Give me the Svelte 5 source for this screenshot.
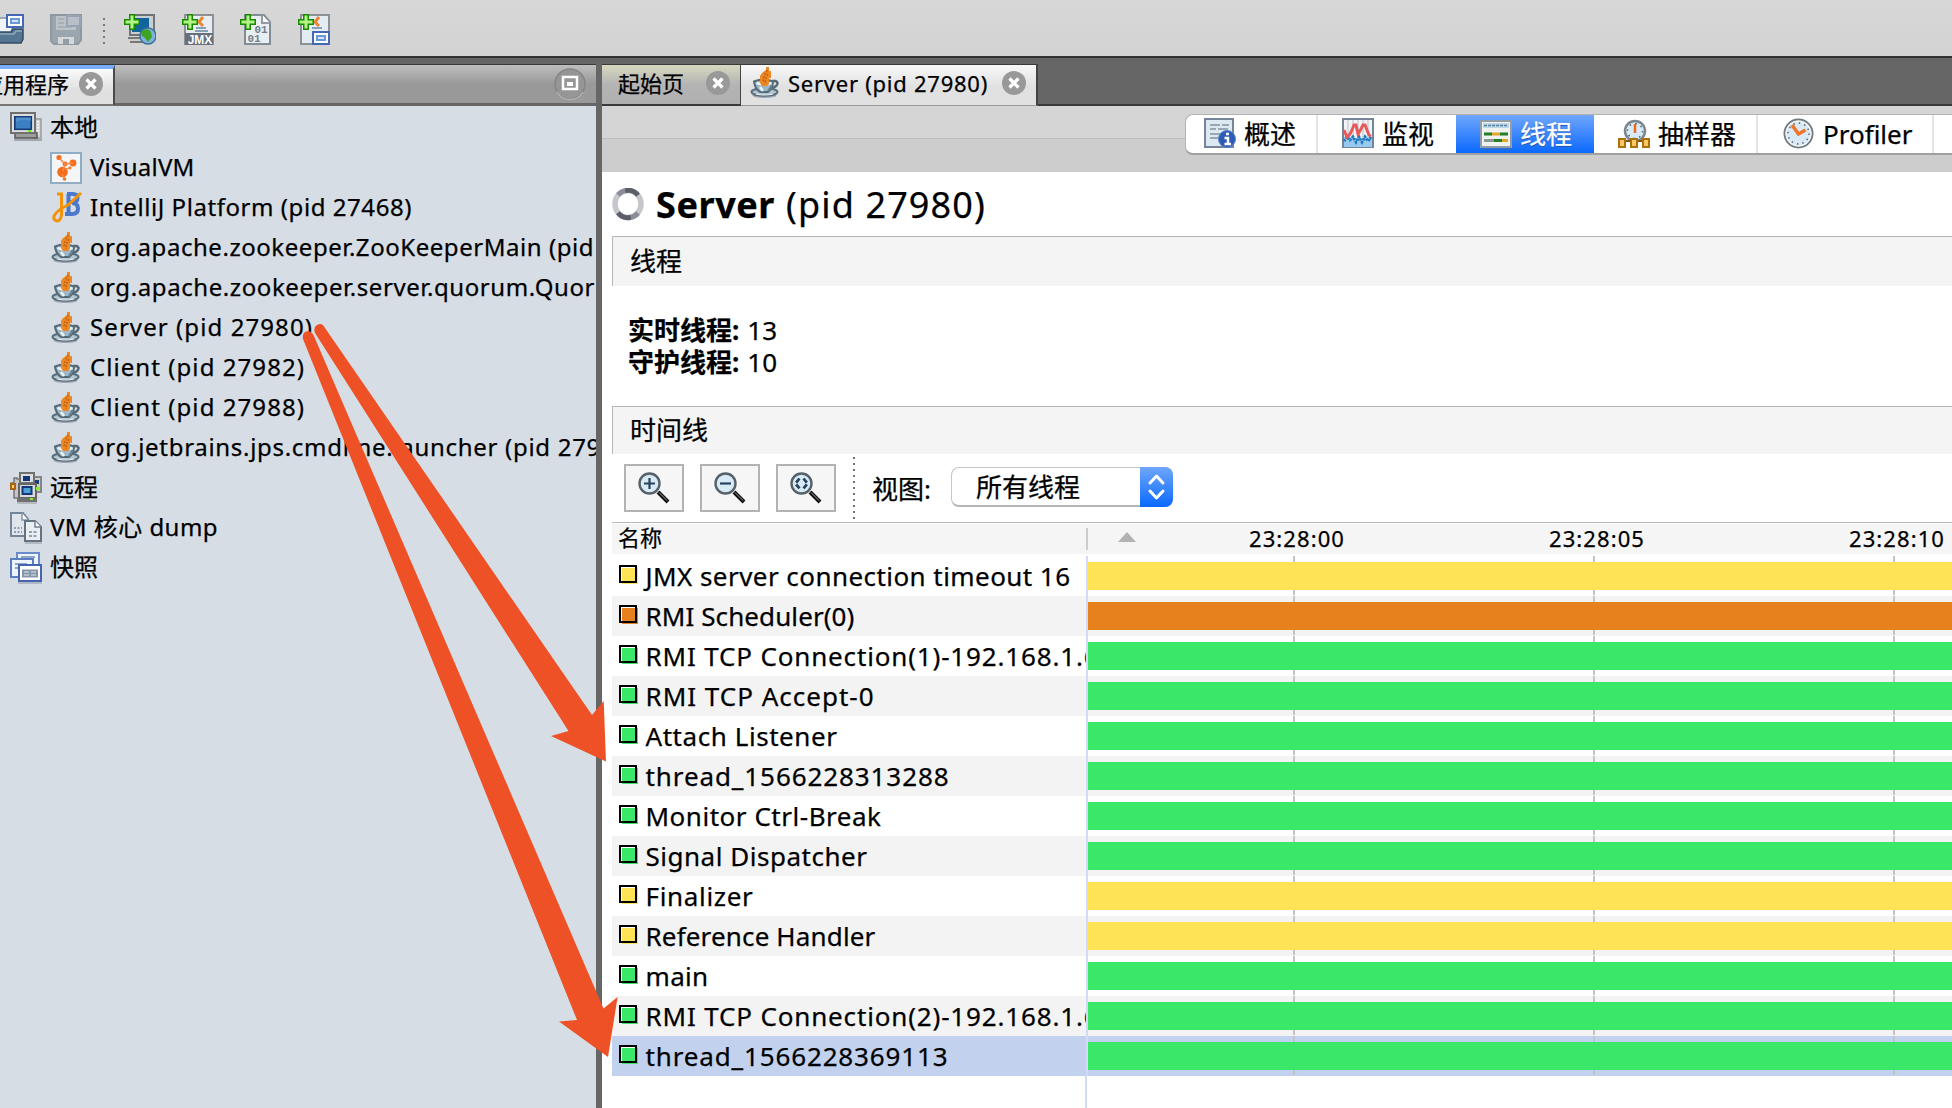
<script>
  const GREEN = '#3be768';
  const YELLOW = '#ffe357';
  const ORANGE = '#e6811e';

  const tree = [
    { icon: 'local', label: '本地', w: 48 },
    { icon: 'vvm', label: 'VisualVM', w: 104.5, child: true },
    { icon: 'jb', label: 'IntelliJ Platform (pid 27468)', w: 322, child: true },
    { icon: 'java', label: 'org.apache.zookeeper.ZooKeeperMain (pid', w: 504, child: true },
    { icon: 'java', label: 'org.apache.zookeeper.server.quorum.Quor', w: 505, child: true },
    { icon: 'java', label: 'Server (pid 27980)', w: 223, child: true },
    { icon: 'java', label: 'Client (pid 27982)', w: 215, child: true },
    { icon: 'java', label: 'Client (pid 27988)', w: 215, child: true },
    { icon: 'java', label: 'org.jetbrains.jps.cmdline.launcher (pid 279', w: 511, child: true },
    { icon: 'remote', label: '远程', w: 48 },
    { icon: 'dump', label: 'VM 核心 dump', w: 168 },
    { icon: 'snap', label: '快照', w: 48 }
  ];

  const threads = [
    { name: 'JMX server connection timeout 16', w: 425, color: YELLOW },
    { name: 'RMI Scheduler(0)', w: 209, color: ORANGE },
    { name: 'RMI TCP Connection(1)-192.168.1.6', w: 454, color: GREEN },
    { name: 'RMI TCP Accept-0', w: 229, color: GREEN },
    { name: 'Attach Listener', w: 192, color: GREEN },
    { name: 'thread_1566228313288', w: 304, color: GREEN },
    { name: 'Monitor Ctrl-Break', w: 236, color: GREEN },
    { name: 'Signal Dispatcher', w: 222, color: GREEN },
    { name: 'Finalizer', w: 108, color: YELLOW },
    { name: 'Reference Handler', w: 230, color: YELLOW },
    { name: 'main', w: 63, color: GREEN },
    { name: 'RMI TCP Connection(2)-192.168.1.6', w: 454, color: GREEN },
    { name: 'thread_1566228369113', w: 303, color: GREEN, selected: true }
  ];

  const views = [
    { icon: 'overview', label: '概述', cls: 'v1' },
    { icon: 'monitor', label: '监视', cls: 'v2' },
    { icon: 'threads', label: '线程', cls: 'v3', active: true },
    { icon: 'sampler', label: '抽样器', cls: 'v4' },
    { icon: 'profiler', label: 'Profiler', cls: 'v5' }
  ];

  const ticks = ['23:28:00', '23:28:05', '23:28:10'];

  // Spreads a label's letters evenly so that it takes up the given width.
  function fit(node, width) {
    const natural = node.getBoundingClientRect().width;
    node.style.letterSpacing = (width - natural) / node.textContent.length + 'px';
  }
</script>

{#snippet plus()}
  <path d="M5 0h6v5h5v6h-5v5H5v-5H0V5h5z" fill="#178a00" />
  <path d="M7 2h2v5h5v2H9v5H7V9H2V7h5z" fill="#b9f58a" />
  <path d="M6.500 1.500h3v5h5v3h-5v5h-3v-5h-5v-3h5z" fill="#b4f385" />
{/snippet}

{#snippet window_(x, y)}
  <rect x={x + 1} y={y + 1} width="16" height="12" fill="#fff" stroke="#4468b6" stroke-width="2" />
  <rect x={x + 5} y={y + 5} width="8" height="4" fill="#d5e4f8" stroke="#6b96d8" stroke-width="2" />
{/snippet}

{#snippet icon(name)}
  <svg class="icon" width="32" height="32" viewBox="0 0 32 32">
    {#if name === 'java'}
      <ellipse cx="15.500" cy="28.500" rx="12" ry="2.500" fill="#9ea7b0" />
      <ellipse cx="15.500" cy="25" rx="13" ry="3.800" fill="#b4c6d1" stroke="#5a6f7d" stroke-width="2" />
      <path d="M23 14h3.500q3.500 1.500 1 4.500q-2 2.500-6 2.500" fill="none" stroke="#536977" stroke-width="2.500" />
      <path d="M5 14.500q9.500-4 19 0q0 7-5 10.500h-8q-5-3-6-10.500z" fill="#9cb6c6" stroke="#566b79" stroke-width="2" />
      <path d="M7.500 16q7.500 2.500 15 0" stroke="#e9f4fa" stroke-width="2.500" fill="none" />
      <path d="M11 20l3 4" stroke="#e9f4fa" stroke-width="2.500" />
      <path d="M19 24q3-3 3.500-6" stroke="#67808f" stroke-width="2" fill="none" />
      <path d="M7 27q8.500 2 17 0" stroke="#eaf3f8" stroke-width="1.200" fill="none" />
      <path d="M17 0h3v4h2v7h-2v6l-2 2h-5l-2-3v-7l2-3 4-3z" fill="#ed8826" />
      <path d="M18.500 3q-4 5-4.500 12M19 7q-3 4-3 10" stroke="#c2620f" stroke-width="1.400" fill="none" stroke-dasharray="2.200 1.200" />
    {:else if name === 'local'}
      <path d="M24 7h7v19h-7z" fill="#d4d4d4" stroke="#9a9a9a" stroke-width="1.500" />
      <path d="M28 9v15" stroke="#fff" stroke-width="1.500" stroke-dasharray="1.500 1.500" />
      <path d="M4 28h28" stroke="#9fa6ad" stroke-width="2" />
      <path d="M5 21h22v5H5z" fill="#9c9c9c" stroke="#555" stroke-width="1.500" />
      <rect x="1" y="1" width="24" height="20" fill="#dedede" stroke="#707070" stroke-width="2" />
      <rect x="4.800" y="4.800" width="16.500" height="12.500" fill="#3c7fc2" stroke="#143a78" stroke-width="1.600" />
      <path d="M6 10q7-4 15-1v-3.500H6z" fill="#6aa3da" opacity=".5" />
      <rect x="18" y="18" width="3" height="2" fill="#6fee22" />
    {:else if name === 'vvm'}
      <rect x="1" y="1" width="30" height="30" fill="#f4f5f7" stroke="#91adc4" stroke-width="2" />
      <g fill="#f46d1b">
        <circle cx="12.500" cy="20" r="5.300" /><circle cx="23" cy="11" r="3.400" />
        <circle cx="9" cy="5.500" r="2.600" /><circle cx="15" cy="12" r="2.400" />
        <circle cx="14.500" cy="27" r="1.800" /><circle cx="20" cy="16" r="1.400" />
      </g>
      <path d="M9 6l6 6-2 7M23 11l-8 1M12 22l2.500 5M15 17l5-1" stroke="#f5884a" stroke-width="1.500" fill="none" />
    {:else if name === 'jb'}
      <path d="M18.500 2v20M17 2h6q4.500 0 4.500 4t-4.500 4h-4M22 11q6 0 6 5.500t-6 5.500h-7" fill="none" stroke="#4b78cc" stroke-width="4" />
      <path d="M7 2h4.500v21q-1 6-4.500 6q-4-1-3-5q3-6 14-11L31 1" fill="none" stroke="#f59308" stroke-width="3" />
    {:else if name === 'remote'}
      <path d="M7 7h6v19H4V12H1v-1h3V6h3z" fill="#c6c6c6" stroke="#777" stroke-width="1.500" />
      <rect x="22" y="5" width="9" height="15" fill="#ccc" stroke="#858585" stroke-width="2" />
      <rect x="22" y="8" width="7" height="4" fill="#153f86" />
      <rect x="10" y="1" width="14" height="10" fill="#ddd" stroke="#707070" stroke-width="2" />
      <rect x="13" y="4" width="7" height="5" fill="#12387c" />
      <rect x="9" y="12" width="17" height="14" fill="#dadada" stroke="#666" stroke-width="2" />
      <rect x="12.500" y="15" width="9" height="7" fill="#4fa0d8" stroke="#12387c" stroke-width="2" />
      <path d="M7 28h20" stroke="#707070" stroke-width="4" />
      <path d="M7 31h20" stroke="#a9aeb3" stroke-width="1.500" />
      <rect x="1" y="12" width="4" height="5" fill="#ffd27a" stroke="#a9640c" stroke-width="2" />
      <rect x="26" y="15" width="4" height="3" fill="#7ff02a" /><rect x="20" y="26" width="3" height="2" fill="#7ff02a" />
    {:else if name === 'dump'}
      <path d="M1 1h12l5 6v17H1z" fill="#e0e6eb" stroke="#76869a" stroke-width="2" />
      <path d="M12 1v7h6" fill="#fff" stroke="#8594a2" stroke-width="1.500" />
      <path d="M4 16h8M4 20h8" stroke="#76869a" stroke-width="1.500" stroke-dasharray="2 1.500" />
      <path d="M15 9h10l6 6v14H15z" fill="#e9eff3" stroke="#64737f" stroke-width="2" />
      <path d="M25 9v6h6" fill="#fff" stroke="#71808e" stroke-width="1.500" />
      <path d="M19 20h8M19 24h8" stroke="#76869a" stroke-width="1.500" stroke-dasharray="3 1.500" />
      <path d="M15 31h17" stroke="#a7adb3" stroke-width="1.500" />
    {:else if name === 'snap'}
      <rect x="7" y="1" width="22" height="17" fill="#eef4fb" stroke="#6a8bc9" stroke-width="2" />
      <path d="M11 5h14" stroke="#8fa6c6" stroke-width="2" />
      <rect x="1" y="7" width="22" height="18" fill="#eef4fb" stroke="#5a7cc0" stroke-width="2" />
      <path d="M5 12h12M5 16h4" stroke="#8fa6c6" stroke-width="2" />
      <rect x="9" y="13" width="22" height="16" fill="#fff" stroke="#4565b0" stroke-width="2" />
      <path d="M13 18.500h14v6H13zM20 18v7M13 21.500h14" fill="#dfe6ee" stroke="#8596a8" stroke-width="2" />
      <path d="M8 31h24" stroke="#a5adb8" stroke-width="1.500" />
    {:else if name === 'open'}
      <path d="M1 4h14l5 6v14H1z" fill="#eef4f8" stroke="#8193a4" stroke-width="1.500" />
      <path d="M1 18h18l2-3h10v10l-2 4H1z" fill="#567591" stroke="#2f4d68" stroke-width="1.500" />
      <path d="M2 20h20l2-3h6" stroke="#8fa9be" stroke-width="1.500" fill="none" />
      {@render window_(14, 0)}
    {:else if name === 'save'}
      <path d="M1 1h30v25l-3 4H4l-3-3z" fill="#9ba5ad" stroke="#8d98a1" stroke-width="2" />
      <path d="M6 2h20v14H6z" fill="#bcc3c8" />
      <path d="M8 5h6M8 9h6M8 13h14" stroke="#a1a9b0" stroke-width="1.500" />
      <rect x="17" y="2" width="13" height="10" fill="#b8bfc8" stroke="#98a3b5" stroke-width="2" />
      <path d="M8 23h16v7H8z" fill="#d4d8da" /><path d="M13 25h6v5h-6z" fill="#929da6" />
    {:else if name === 'addRemote'}
      <rect x="6" y="1" width="24" height="20" fill="#c9ced1" stroke="#6e7479" stroke-width="2" />
      <rect x="8" y="4" width="17" height="14" fill="#11659c" />
      <path d="M4 24h22v4H6" fill="#ccc" stroke="#777" stroke-width="2" />
      <circle cx="24" cy="22" r="8" fill="#7fb3dc" stroke="#3d6f9c" stroke-width="1.500" />
      <path d="M18 17q6-4 9 1l1 5-4 5-3-4-4-3z" fill="#3ca326" />
      {@render plus()}
    {:else if name === 'addJmx'}
      <rect x="3" y="1" width="28" height="29" fill="#e7eef3" stroke="#8b9197" stroke-width="2" />
      <path d="M21 3l-4 5 4 4" stroke="#ee8530" stroke-width="3" fill="none" />
      <path d="M14 14h10M13 17h13" stroke="#86a2b8" stroke-width="2" />
      <path d="M3 19h28v12H3z" fill="#687179" />
      <text x="18" y="30" class="jmx">JMX</text>
      {@render plus()}
    {:else if name === 'addDump'}
      <path d="M5 1h19l6 7v22H5z" fill="#e9eef2" stroke="#828c95" stroke-width="2" />
      <path d="M22 1v8h8" fill="#fff" stroke="#929ba4" stroke-width="2" />
      <text x="21" y="19" class="bits">01</text>
      <text x="14" y="28" class="bits">01</text>
      {@render plus()}
    {:else if name === 'addSnap'}
      <rect x="3" y="1" width="28" height="29" fill="#e3ecf2" stroke="#8b9197" stroke-width="2" />
      <path d="M21 3l-4 5 4 4" stroke="#ee8530" stroke-width="3" fill="none" />
      <path d="M14 14h10" stroke="#86a2b8" stroke-width="2" />
      {@render window_(14, 17)}
      {@render plus()}
    {:else if name === 'overview'}
      <rect x="1" y="1" width="28" height="28" fill="#dde8f1" stroke="#74859a" stroke-width="2" />
      <path d="M6 7h10M18 7h7M6 11h6M14 11h10M6 16h12M6 20h8" stroke="#9aa8b4" stroke-width="2" />
      <circle cx="23" cy="21" r="8.500" fill="#2d5cb4" stroke="#5b83cc" stroke-width="1" />
      <path d="M22 16h3M20.500 20h3.500v6M20.500 26h6.500" stroke="#fff" stroke-width="2.500" fill="none" />
    {:else if name === 'monitor'}
      <rect x="1" y="1" width="30" height="28" fill="#f1f3f5" stroke="#74859a" stroke-width="2" />
      <path d="M6 2v18M11 2v18M16 2v18M21 2v18M26 2v18" stroke="#ccd2d8" stroke-width="1.500" />
      <path d="M2 19l3-2 3 3 3-3 3 5 3-5 3 5 3-5 3 4 2-2 2 1v9H2z" fill="#98caef" />
      <path d="M2 23l3-4 3 3 3-3 3 5 3-5 3 5 3-5 3 4 2-3 2 1" fill="none" stroke="#2279bf" stroke-width="3" stroke-dasharray="2 1" />
      <path d="M2 12l3 7 3-3 2-4 2-5h2l2 9 3-5 2-4h2l2 5 2 5 2 1" fill="none" stroke="#e65a5a" stroke-width="3" />
    {:else if name === 'threads'}
      <rect x="1" y="3" width="30" height="26" fill="#f0f1f1" stroke="#929da5" stroke-width="2" />
      <rect x="3" y="5" width="26" height="5" fill="#bed7e9" />
      <path d="M4 7.500h24" stroke="#58819e" stroke-width="1.500" stroke-dasharray="3 1" />
      <path d="M4 16h8M20 16h8M14 22.500h8" stroke="#247e23" stroke-width="3" />
      <path d="M12 16h8M22 22.500h6" stroke="#e3a72e" stroke-width="3" />
      <path d="M4 22.500h10" stroke="#8b9a91" stroke-width="3" />
      <path d="M3 31h28" stroke="#486aa0" stroke-width="1.500" opacity=".6" />
    {:else if name === 'sampler'}
      <circle cx="17" cy="13" r="10" fill="#d7eaf6" stroke="#7d8790" stroke-width="2.500" />
      <path d="M17 6v9" stroke="#f06a1d" stroke-width="2.500" />
      <circle cx="17" cy="13" r="7.500" fill="none" stroke="#52616e" stroke-width="1.500" stroke-dasharray="1.500 4.400" />
      <path d="M4 23h26" stroke="#7d5710" stroke-width="2" />
      <g fill="#ffc866" stroke="#a9700c" stroke-width="2">
        <rect x="1" y="21" width="6" height="8" /><rect x="13" y="21" width="6" height="8" /><rect x="25" y="21" width="6" height="8" />
      </g>
    {:else if name === 'profiler'}
      <circle cx="15.500" cy="15.500" r="14" fill="#d8eaf6" stroke="#737b82" stroke-width="2" />
      <circle cx="15.500" cy="15.500" r="12.300" fill="none" stroke="#f4f4f4" stroke-width="1.500" />
      <circle cx="15.500" cy="15.500" r="10.500" fill="none" stroke="#677784" stroke-width="1.800" stroke-dasharray="1.500 4" />
      <path d="M9 7l6.500 9 7-4" fill="none" stroke="#ee7529" stroke-width="3.500" />
    {/if}
  </svg>
{/snippet}

{#snippet close()}
  <svg class="close" width="24" height="24" viewBox="0 0 24 24">
    <circle cx="12" cy="12" r="12" fill="#999" />
    <path d="M7.500 7.500l9 9M16.500 7.500l-9 9" stroke="#fff" stroke-width="3.200" />
  </svg>
{/snippet}

{#snippet magnifier(kind)}
  <button class="zoom-btn" aria-label={kind}>
    <svg width="32" height="32" viewBox="0 0 32 32">
      <path d="M20 20l10 10" stroke="#111" stroke-width="4" />
      <path d="M21 20.500l8 8" stroke="#999" stroke-width="1" />
      <circle cx="11.500" cy="11.500" r="10" fill="#d9eaf7" stroke="#56616a" stroke-width="2.400" />
      {#if kind === 'Zoom in'}
        <path d="M11.500 6v11M6 11.500h11" stroke="#27435f" stroke-width="2.200" />
      {:else if kind === 'Zoom out'}
        <path d="M6 11.500h11" stroke="#27435f" stroke-width="2.200" />
      {:else}
        <path d="M9.500 6.500l-4 5 4 5M13.500 6.500l4 5-4 5" fill="none" stroke="#27435f" stroke-width="2.800" stroke-dasharray="5.400 2" />
      {/if}
    </svg>
  </button>
{/snippet}

<div class="app">
  <header class="toolbar">
    {@render icon('open')}
    {@render icon('save')}
    <span class="dots"></span>
    {@render icon('addRemote')}
    {@render icon('addJmx')}
    {@render icon('addDump')}
    {@render icon('addSnap')}
  </header>

  <div class="body">
    <aside class="sidebar">
      <div class="side-tabs">
        <div class="side-tab"><span>应用程序</span>{@render close()}</div>
        <svg class="minimize" width="32" height="34" viewBox="0 0 32 34">
          <circle cx="16" cy="17" r="15" fill="#969696" stroke="#858585" stroke-width="1.500" />
          <path d="M3 25a15 15 0 0 0 26 0" fill="none" stroke="#b2b2b2" stroke-width="1.500" />
          <rect x="9" y="10" width="14" height="12" fill="none" stroke="#fff" stroke-width="2.500" />
          <rect x="13" y="15" width="6" height="4" fill="#fff" />
        </svg>
      </div>
      <ul class="tree">
        {#each tree as node}
          <li class:child={node.child}>
            {@render icon(node.icon)}
            <span class="label" use:fit={node.w}>{node.label}</span>
          </li>
        {/each}
      </ul>
    </aside>

    <main class="main">
      <div class="doc-tabs">
        <div class="doc-tab start"><span>起始页</span>{@render close()}</div>
        <div class="doc-tab current">
          {@render icon('java')}
          <span class="label" use:fit={200}>Server (pid 27980)</span>
          {@render close()}
        </div>
        <div class="doc-rest"></div>
      </div>

      <div class="view-strip">
        <div class="views">
          {#each views as v}
            <div class="view {v.cls}" class:active={v.active}>
              {@render icon(v.icon)}<span>{v.label}</span>
            </div>
          {/each}
          <div class="view"></div>
        </div>
      </div>

      <div class="title">
        <svg width="32" height="34" viewBox="0 0 32 34">
          <ellipse cx="16" cy="16" rx="13" ry="13.500" fill="none" stroke="#c6c7cd" stroke-width="5.500" />
          <path d="M13 2.800q8-2 13 4.500M19 29.200q-8 2-13-4.500" fill="none" stroke="#5c5e6a" stroke-width="5" />
          <path d="M6 7q3-3.500 7-4.200M26 25q-3 3.500-7 4.200" fill="none" stroke="#8b8d98" stroke-width="5" />
        </svg>
        <b class="label" use:fit={119}>Server</b>
        <span class="label" use:fit={200}>(pid 27980)</span>
      </div>

      <div class="section threads-head">线程</div>
      <div class="counts">
        <div><b>实时线程:</b><span>13</span></div>
        <div><b>守护线程:</b><span>10</span></div>
      </div>
      <div class="section timeline-head">时间线</div>

      <div class="controls">
        {@render magnifier('Zoom in')}
        {@render magnifier('Zoom out')}
        {@render magnifier('Fit')}
        <span class="rule"></span>
        <span class="view-label">视图:</span>
        <div class="select">
          <span>所有线程</span>
          <svg width="33" height="40" viewBox="0 0 33 40">
            <path d="M10 16l6.500-7 6.500 7M10 24l6.500 7 6.500-7" fill="none" stroke="#fff" stroke-width="3" stroke-linecap="round" stroke-linejoin="round" />
          </svg>
        </div>
      </div>

      <div class="table">
        <div class="thead">
          <div class="name-head">名称</div>
          <div class="time-head">
            <svg width="18" height="10" viewBox="0 0 18 10"><path d="M9 0l9 10H0z" fill="#b2b2b2" /></svg>
            <div class="ticks">
              {#each ticks as t}<span><i class="label" use:fit={96}>{t}</i></span>{/each}
            </div>
          </div>
        </div>
        {#each threads as t}
          <div class="row" class:selected={t.selected}>
            <div class="name">
              <svg width="20" height="20" viewBox="0 0 20 20">
                <rect x="2" y="2" width="15" height="15" fill="#fff" />
                <rect x="3" y="3" width="16" height="16" fill={t.color} />
                <rect x="1" y="1" width="16" height="16" fill="none" stroke="#000" stroke-width="2" />
              </svg>
              <span class="label" use:fit={t.w}>{t.name}</span>
            </div>
            <div class="track"><div class="bar" style:background={t.color}></div></div>
          </div>
        {/each}
        <div class="blank"></div>
      </div>
    </main>
  </div>

  <svg class="arrows" width="1952" height="1108" viewBox="0 0 1952 1108">
    <g fill="#ee5125">
      <path d="M325 328L592 715L603.700 701L606 761.500L551 736L568.500 731L315 333Q313 327 317 325Q322 322 325 328z" />
      <path d="M313.500 335L603.500 1008.500L617.600 997L608 1057L559 1021.500L577 1020L303 339Q302 333 306 331.500Q311 330 313.500 335z" />
    </g>
  </svg>
</div>

<style>
  :global(body) { margin: 0; overflow: hidden; }
  .app {
    position: relative;
    width: 1952px; height: 1108px;
    overflow: hidden;
    display: flex; flex-direction: column;
    background: #666;
    color: #000;
    font: 24px/1 'Noto Sans', 'Noto Sans CJK SC', sans-serif;
    -webkit-text-stroke: 0.25px currentColor;
  }
  .app * { box-sizing: border-box; }
  .icon, .close { flex: none; display: block; }
  .label { white-space: pre; flex: none; font-style: normal; }

  .toolbar {
    height: 58px; flex: none;
    display: flex; align-items: flex-start;
    padding-top: 14px;
    background: linear-gradient(#d7d7d7, #d3d3d3);
    border-bottom: 2px solid #333;
  }
  .toolbar .icon { margin-right: 26px; }
  .toolbar .icon:first-child { margin-left: -8px; }
  .toolbar .icon:nth-child(2) { margin-right: 21px; }
  .dots {
    width: 2px; height: 26px; margin: 4px 19px 0 0;
    background: repeating-linear-gradient(#777 0 2px, transparent 2px 6px);
  }
  .jmx { font: bold 12px 'Liberation Sans', sans-serif; fill: #fff; text-anchor: middle; }
  .bits { font: bold 11px 'Liberation Mono', monospace; fill: #73808b; text-anchor: middle; }

  .body { flex: 1; min-height: 0; display: flex; padding-top: 6px; }
  .sidebar { width: 596px; margin-right: 6px; flex: none; display: flex; flex-direction: column; background: #d6dde5; overflow: hidden; }
  .side-tabs {
    height: 42px; flex: none;
    display: flex; justify-content: space-between;
    border-top: 1px solid #3a3a3a; border-bottom: 3px solid #666;
    background: linear-gradient(#bebebe, #999 50%, #9a9a9a);
    font-size: 22px;
  }
  .side-tab {
    width: 115px; height: 41px; flex: none;
    display: flex; align-items: center; justify-content: flex-end; gap: 10px;
    padding: 0 10px 6px 0;
    white-space: nowrap;
    border-top: 4px solid #75aef5; border-right: 2px solid #4a4a4a; border-bottom: 2px solid #777;
    background: linear-gradient(#fafafa, #e0e0e0 60%);
  }
  .minimize { margin: 2px 10px 0 0; }
  .tree { list-style: none; margin: 0; padding: 1px 0 0; }
  .tree li { height: 40px; display: flex; align-items: center; padding-left: 10px; gap: 8px; white-space: nowrap; }
  .tree li.child { padding-left: 50px; }
  .tree .icon { margin-top: 1px; }

  .main { flex: 1; min-width: 0; display: flex; flex-direction: column; background: #fff; }
  .doc-tabs { height: 42px; flex: none; display: flex; font-size: 22px; }
  .doc-tab { display: flex; align-items: center; border-top: 1px solid #3a3a3a; }
  .start {
    width: 139px; padding: 0 10px 3px 16px; justify-content: space-between;
    border-right: 1px solid #444; border-bottom: 2px solid #3a3a3a;
    background: linear-gradient(#d8d8c0, #b4b4b4 50%, #b0b0b0);
  }
  .current {
    width: 297px; padding: 0 10px 4px 8px;
    border-right: 2px solid #444; border-bottom: 1px solid #999;
    background: linear-gradient(#f8f8f8, #e1e1e1 55%);
  }
  .current .icon { margin-right: 7px; }
  .current .label { margin-right: 14px; }
  .doc-rest { flex: 1; background: #666; border-bottom: 2px solid #3a3a3a; }

  .view-strip {
    height: 66px; flex: none; display: flex; justify-content: flex-end;
    padding-top: 8px;
    background: linear-gradient(#d5d5d5 0 32px, #bebebe 32px 33px, #cdcdcd 33px);
  }
  .views {
    width: 767px; height: 41px; display: flex; overflow: hidden;
    border: 1px solid #b3b3b3; border-right: 0; border-bottom: 2px solid #a0a0a0;
    border-radius: 8px 0 0 8px;
    background: #fff; font-size: 26px;
  }
  .view { flex: 1; display: flex; align-items: flex-start; gap: 8px; padding-top: 3px; white-space: nowrap; }
  .view:not(:last-child) { flex: none; border-right: 2px solid #e4e4e4; }
  .view span { line-height: 32px; }
  .v1 { width: 132px; padding-left: 18px; }
  .v2 { width: 138px; padding-left: 24px; }
  .v3 { width: 138px; padding-left: 24px; }
  .v4 { width: 164px; padding-left: 24px; }
  .v5 { width: 176px; padding-left: 25px; }
  .view.v2, .view.v3 { border-right: 0; }
  .active { color: #fff; background: linear-gradient(#6fa6fb, #0a69ff); text-shadow: 0 1px 1px #1b4fa8; }

  .title { height: 64px; flex: none; display: flex; align-items: center; padding: 1px 0 0 10px; font-size: 36px; }
  .title b { margin: 0 11px 0 12px; }

  .section {
    flex: none; margin-left: 10px; padding: 0 0 2px 17px;
    display: flex; align-items: center;
    border-top: 1px solid #b6b6b6; border-left: 1px solid #b6b6b6;
    background: #f4f4f4; font-size: 26px;
  }
  .threads-head { height: 50px; }
  .timeline-head { height: 48px; }
  .counts { height: 120px; flex: none; padding: 28px 0 0 26px; font-size: 26px; line-height: 32px; }
  .counts div { display: flex; gap: 8px; }
  .controls { height: 68px; flex: none; display: flex; align-items: center; padding-left: 22px; font-size: 26px; }
  .zoom-btn {
    width: 60px; height: 48px; margin-right: 16px; padding: 0; flex: none;
    display: flex; align-items: center; justify-content: center;
    border: 2px solid #b3b3b3; background: #f6f6f6;
  }
  .rule { width: 2px; height: 62px; margin: 0 17px 0 1px; background: repeating-linear-gradient(#777 0 2px, transparent 2px 6px); }
  .view-label { width: 79px; white-space: nowrap; padding-top: 1px; }
  .select {
    width: 222px; height: 40px; display: flex; align-items: center; justify-content: space-between;
    margin-top: -2px; padding-left: 24px; border: 1px solid #c6c6c6; border-right: 0; border-bottom: 2px solid #b5b5b5;
    border-radius: 8px; background: #fff;
  }
  .select svg { flex: none; margin: -1px 0 -2px; border-radius: 0 8px 8px 0; background: linear-gradient(#6fa6fb, #0a69ff); }

  .table { flex: 1; min-height: 0; margin-left: 10px; border-top: 1px solid #b8b8b8; display: flex; flex-direction: column; }
  .thead { height: 33px; flex: none; display: flex; padding: 1px 0 2px; font-size: 22px; }
  .name-head { width: 474px; flex: none; padding: 2px 0 0 6px; background: #f5f5f5; }
  .time-head { flex: 1; display: flex; align-items: center; background: linear-gradient(#ccc, #ccc) 0 4px / 2px 22px no-repeat #f5f5f5; }
  .time-head svg { flex: none; margin: 0 0 4px 32px; }
  .ticks { width: 900px; flex: none; margin: -3px 0 0 11px; display: flex; }
  .ticks span { width: 300px; text-align: center; }
  .row { height: 40px; flex: none; display: flex; }
  .row:nth-child(odd) .name, .row:nth-child(odd) .track { background-color: #f3f3f3; }
  .row.selected .name, .row.selected .track { background-color: #c1d1ee; }
  .name {
    width: 474px; flex: none; display: flex; align-items: center; gap: 6.500px;
    padding: 0 0 0 7px; overflow: hidden; font-size: 26px; line-height: 38px;
  }
  .name svg { flex: none; margin-top: -2px; }
  .track {
    flex: 1; border-left: 2px solid #d3daf4; padding-top: 6px;
    background-image: linear-gradient(#c4c4c4, #c4c4c4), linear-gradient(#c4c4c4, #c4c4c4), linear-gradient(#c4c4c4, #c4c4c4);
    background-size: 2px 39px; background-repeat: no-repeat;
    background-position: 205px 0, 505px 0, 805px 0;
  }
  .bar { height: 28px; }
  .blank { flex: 1; margin-left: 473px; border-left: 2px solid #d3daf4; }

  /* Annotation layer drawn over the whole window. */
  .arrows { position: absolute; inset: 0; pointer-events: none; }
</style>
